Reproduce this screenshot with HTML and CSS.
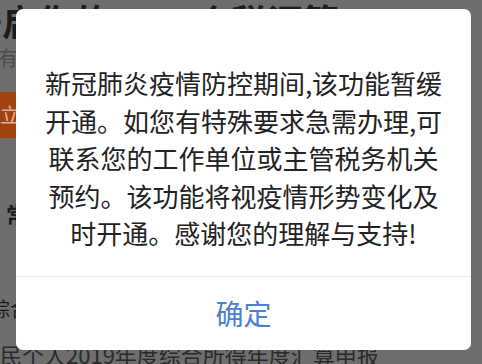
FILE: index.html
```html
<!DOCTYPE html>
<html lang="zh-CN">
<head>
<meta charset="utf-8">
<title>提示</title>
<link rel="stylesheet" href="styles.css">
</head>
<body>
<div class="page">
  <div class="headline">开启你的2019个税汇算</div>
  <div class="sub">有任何疑问请查看帮助说明</div>
  <div class="cta">立即申报</div>
  <div class="section-title">常见问题</div>
  <div class="item">综合所得年度汇算</div>
  <div class="item-desc">居民个人2019年度综合所得年度汇算申报</div>
</div>
<div class="overlay">
  <div class="dialog">
    <div class="msg">新冠肺炎疫情防控期间,该功能暂缓开通。如您有特殊要求急需办理,可联系您的工作单位或主管税务机关预约。该功能将视疫情形势变化及时开通。感谢您的理解与支持!</div>
    <div class="actions"><button class="ok">确定</button></div>
  </div>
</div>
</body>
</html>
```
FILE: styles.css
```css
html, body {
  margin: 0;
  padding: 0;
}
body {
  width: 482px;
  height: 364px;
  overflow: hidden;
  position: relative;
  background: #6e6e6e;
  font-family: "Noto Sans CJK SC", "Noto Sans", sans-serif;
}
.page {
  display: flex;
  flex-direction: column;
  white-space: nowrap;
  color: #1c1c1c;
}
.headline {
  font-size: 36px;
  line-height: 40px;
  font-weight: 700;
  margin-top: 0;
  margin-left: -34px;
}
.sub {
  font-size: 20px;
  line-height: 24px;
  color: #4c4c4c;
  margin-top: 6px;
  margin-left: -2px;
}
.cta {
  height: 46px;
  margin-top: 22px;
  background: #a2420f;
  color: #d9b3a0;
  font-size: 20px;
  line-height: 46px;
  width: 240px;
}
.section-title {
  font-size: 22px;
  line-height: 26px;
  font-weight: 700;
  margin-top: 62px;
  margin-left: 6px;
}
.item {
  font-size: 20px;
  line-height: 24px;
  margin-top: 71px;
  margin-left: -10px;
}
.item-desc {
  font-size: 22px;
  line-height: 26px;
  color: #2a2a2a;
  margin-top: 20px;
  margin-left: -22px;
}
.overlay {
  position: absolute;
  inset: 0;
  display: flex;
  align-items: flex-start;
  padding: 9px 0 0 16px;
}
.dialog {
  width: 455px;
  background: #ffffff;
  border-radius: 7px;
  overflow: hidden;
}
.msg {
  padding: 55px 22px 24px;
  font-size: 26px;
  line-height: 37.5px;
  text-align: center;
  color: #222222;
}
.actions {
  border-top: 1px solid #e8e8e8;
  height: 73px;
  display: flex;
  align-items: center;
  justify-content: center;
}
.ok {
  border: 0;
  background: none;
  padding: 0;
  font-family: "Noto Sans CJK SC", sans-serif;
  font-size: 28px;
  color: #4a7fd4;
}
```
